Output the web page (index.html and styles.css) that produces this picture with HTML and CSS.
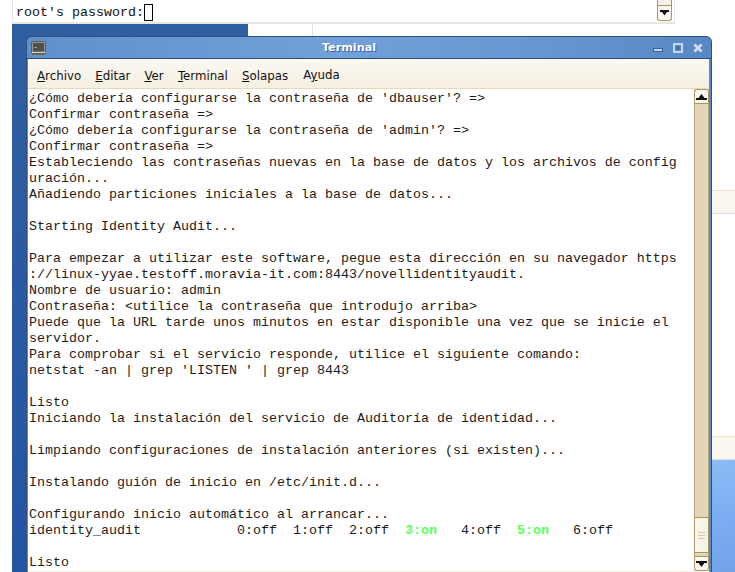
FILE: index.html
```html
<!DOCTYPE html>
<html lang="es">
<head>
<meta charset="utf-8">
<title>Terminal</title>
<link rel="stylesheet" href="styles.css">
</head>
<body>
<div class="desk">
  <div class="blue-panel"></div>
  <div class="sky-panel"></div>
  <div class="back-window">
    <div class="back-cell"></div>
    <div class="back-cell-wide">
      <div class="band band-one"></div>
      <div class="band band-two"></div>
    </div>
  </div>

  <section class="prompt-window">
    <div class="prompt-text">root's password:<span class="cursor"></span></div>
    <div class="prompt-scroll">
      <div class="prompt-thumb"></div>
      <div class="prompt-btn">
        <svg width="9" height="6" viewBox="0 0 9 6"><path d="M0 0H9V2H7L4.500 5.500L2 2H0Z" fill="#111"/></svg>
      </div>
    </div>
  </section>

  <section class="terminal">
    <header class="titlebar">
      <svg class="term-icon" width="15" height="14" viewBox="0 0 15 14">
        <rect x="0.500" y="0.500" width="14" height="12" rx="1" fill="#96968e" stroke="#5d5d56"/>
        <rect x="2" y="2" width="11" height="8.500" fill="#4a514c"/>
        <rect x="3" y="6" width="3" height="1" fill="#9aa29c"/>
        <rect x="1" y="11" width="13" height="1" fill="#d0d0c9"/>
        <rect x="1" y="13" width="13" height="1" fill="#6b6b64"/>
      </svg>
      <h1 class="title">Terminal</h1>
      <div class="wm-buttons">
        <svg width="11" height="10" viewBox="0 0 11 10"><rect x="1.500" y="5.500" width="9" height="3" fill="#c6d6ec" stroke="#3b609c"/></svg>
        <svg width="10" height="10" viewBox="0 0 10 10"><rect x="1" y="1" width="8" height="8" fill="#5b8bc8" stroke="#c6d6ec" stroke-width="2"/><rect x="3.500" y="3.500" width="3" height="3" fill="#3b609c"/></svg>
        <svg width="10" height="10" viewBox="0 0 10 10"><path d="M1.500 1.500L8.500 8.500M8.500 1.500L1.500 8.500" stroke="#d2def0" stroke-width="2.600" fill="none"/></svg>
      </div>
    </header>
    <nav class="menubar">
      <span class="menu-item"><u>A</u>rchivo</span>
      <span class="menu-item"><u>E</u>ditar</span>
      <span class="menu-item"><u>V</u>er</span>
      <span class="menu-item"><u>T</u>erminal</span>
      <span class="menu-item"><u>S</u>olapas</span>
      <span class="menu-item menu-raised">A<u>y</u>uda</span>
    </nav>
    <div class="body">
<pre class="output">¿Cómo debería configurarse la contraseña de 'dbauser'? =&gt;
Confirmar contraseña =&gt;
¿Cómo debería configurarse la contraseña de 'admin'? =&gt;
Confirmar contraseña =&gt;
Estableciendo las contraseñas nuevas en la base de datos y los archivos de config
uración...
Añadiendo particiones iniciales a la base de datos...

Starting Identity Audit...

Para empezar a utilizar este software, pegue esta dirección en su navegador https
://linux-yyae.testoff.moravia-it.com:8443/novellidentityaudit.
Nombre de usuario: admin
Contraseña: &lt;utilice la contraseña que introdujo arriba&gt;
Puede que la URL tarde unos minutos en estar disponible una vez que se inicie el
servidor.
Para comprobar si el servicio responde, utilice el siguiente comando:
netstat -an | grep 'LISTEN ' | grep 8443

Listo
Iniciando la instalación del servicio de Auditoría de identidad...

Limpiando configuraciones de instalación anteriores (si existen)...

Instalando guión de inicio en /etc/init.d...

Configurando inicio automático al arrancar...
identity_audit            0:off  1:off  2:off  <b class="on">3:on</b>   4:off  <b class="on">5:on</b>   6:off

Listo</pre>
      <div class="scrollbar">
        <div class="sb-btn sb-up">
          <svg width="11" height="6" viewBox="0 0 11 6"><path d="M5.500 0L8.500 4H11V6H0V4H2.500Z" fill="#111"/></svg>
        </div>
        <div class="sb-trough"></div>
        <div class="sb-thumb">
          <span class="grip"></span><span class="grip"></span><span class="grip"></span>
        </div>
        <div class="sb-gap"></div>
        <div class="sb-btn sb-down">
          <svg width="11" height="6" viewBox="0 0 11 6"><path d="M0 0H11V2H8.500L5.500 6L2.500 2H0Z" fill="#111"/></svg>
        </div>
      </div>
    </div>
  </section>
</div>
</body>
</html>
```
FILE: styles.css
```css
* { box-sizing: border-box; }
html, body { margin: 0; padding: 0; background: #fff; }
.desk { position: relative; width: 735px; height: 572px; overflow: hidden; background: #fff; }

.blue-panel {
  position: absolute; left: 12px; top: 24px; width: 236px; height: 548px;
  background: linear-gradient(180deg, #2f5f9f 0, #2355a5 100%);
}
.sky-panel {
  position: absolute; left: 712px; top: 460px; width: 23px; height: 112px;
  background: linear-gradient(170deg, #8bbcf7 0, #7fb0f2 40%, #72a3ea 100%);
}
.back-window {
  position: absolute; left: 248px; top: 24px; width: 487px; height: 436px;
  display: flex; background: #fff;
}
.back-cell { width: 65px; border-right: 1px solid #e4e2da; }
.back-cell-wide { flex: 1; position: relative; }
.band { position: absolute; left: 0; right: 0; background: #faf7f0; }
.band-one { top: 166px; height: 24px; border-top: 1px solid #efe3c8; border-bottom: 1px solid #dcdbd6; }
.band-two { top: 412px; height: 24px; border-top: 1px solid #efe3c8; border-bottom: 1px solid #e0ded8; }

.prompt-window {
  position: absolute; left: 12px; top: -2px; width: 663px; height: 26px;
  background: #fff; border-left: 1px solid #e8e6df; border-right: 1px solid #e8e6df; border-bottom: 2px solid #e8e6df;
  display: flex; justify-content: space-between;
}
.prompt-text {
  font: 13.33px/16px "Liberation Mono", monospace; color: #111;
  padding: 7px 0 0 3px; white-space: pre; display: flex;
}
.cursor { display: block; width: 9px; height: 17px; margin-top: -1px; border: 1px solid #000; }
.prompt-scroll { width: 15px; margin-right: 2px; display: flex; flex-direction: column; height: 23px; }
.prompt-thumb { height: 8px; background: #f7f2e8; border: 1px solid #a89560; border-width: 0 1px 1px; }
.prompt-btn {
  height: 15px; background: #fbf8f1; border: 1px solid #a89560; border-top: 0; border-radius: 0 0 3px 3px;
  display: flex; align-items: center; justify-content: center;
}

.terminal {
  position: absolute; left: 26px; top: 36px; width: 686px; height: 536px;
  display: flex; flex-direction: column;
  background: #5a8ac6; border: 1px solid #2f4f80; border-bottom: 0; border-radius: 6px 6px 0 0;
  overflow: hidden;
}
.titlebar {
  height: 22px; display: flex; align-items: center; flex-shrink: 0; padding: 0 8px 0 4px;
  background: linear-gradient(90deg, #5f90cd 0, #72a1d9 45%, #6797d2 75%, #5788c5 100%);
  border-bottom: 1px solid #2c4a7c;
}
.term-icon { flex-shrink: 0; margin-top: 1px; }
.title {
  flex: 1; margin: 0; text-align: center; font: bold 11.2px/16px "DejaVu Sans", sans-serif;
  color: #fff; text-shadow: 1px 1px 0 #3b609c;
}
.wm-buttons { display: flex; gap: 10px; align-items: center; }

.menubar {
  height: 30px; flex-shrink: 0; display: flex; align-items: flex-start; gap: 14.2px; padding: 0 0 0 9px;
  margin: 0 2px 0 1px;
  background: linear-gradient(180deg, #fbf8f1 0, #f5f0e3 100%);
  border-bottom: 1px solid #e6d9b8;
  font: 11.8px/16px "DejaVu Sans", sans-serif; color: #111;
}
.menu-item { padding-top: 9px; }
.menu-raised { padding-top: 8px; margin-left: 1px; }

.body {
  flex: 1; min-height: 0; display: flex; margin: 0 2px 0 1px; background: #fff;
  border-bottom: 1px solid #f7f2e6;
}
.output {
  flex: 1; margin: 0; padding: 2px 0 0 1px; overflow: hidden; white-space: pre;
  font: 13.33px/16px "Liberation Mono", monospace; color: #1c1c1c;
}
.on { color: #5cff5c; font-weight: bold; }

.scrollbar { width: 15px; display: flex; flex-direction: column; background: #e3d6b8; }
.sb-btn {
  height: 15px; flex-shrink: 0; background: #fbf8f1; border: 1px solid #a89560;
  display: flex; align-items: center; justify-content: center;
}
.sb-up { border-radius: 3px 3px 0 0; }
.sb-down { border-radius: 0 0 3px 3px; }
.sb-trough { flex: 1; border: 1px solid #bca97a; border-width: 0 1px; }
.sb-thumb {
  height: 36px; flex-shrink: 0; background: linear-gradient(90deg, #fbf8f1 0, #f5f0e3 100%);
  border: 1px solid #a89560; display: flex; flex-direction: column; align-items: center; justify-content: center; gap: 2px;
}
.grip { display: block; width: 7px; height: 1px; background: #d8c9a4; }
.sb-gap { height: 3px; flex-shrink: 0; border: 1px solid #bca97a; border-width: 0 1px; }
```
